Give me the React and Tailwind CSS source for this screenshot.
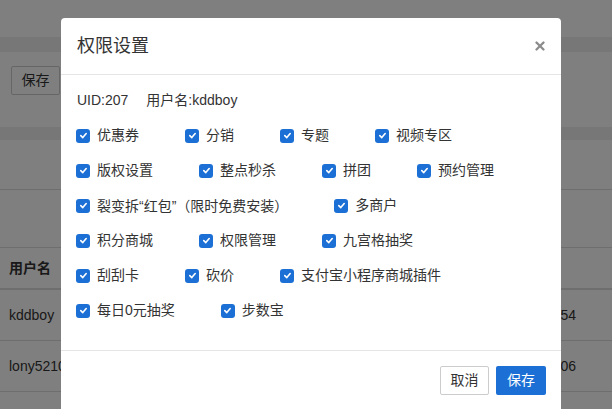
import { X } from 'lucide-react'

const ROWS = [
  ['优惠券', '分销', '专题', '视频专区'],
  ['版权设置', '整点秒杀', '拼团', '预约管理'],
  ['裂变拆“红包”（限时免费安装）', '多商户'],
  ['积分商城', '权限管理', '九宫格抽奖'],
  ['刮刮卡', '砍价', '支付宝小程序商城插件'],
  ['每日0元抽奖', '步数宝'],
]

const TABLE = [
  { name: 'kddboy', end: '54' },
  { name: 'lony5210', end: '06' },
  { name: '00510', end: '10' },
]

const CJK = { fontFamily: '"Noto Sans CJK SC", sans-serif', textSpacingTrim: 'space-all' }

// full-width brackets get a fixed 1em box, otherwise chrome trims them narrow
function Text({ value }) {
  const parts = value.split(/([（）])/)
  return parts.map((p, i) => {
    if (p === '（')
      return <span key={i} className="inline-block w-[14px] text-right" style={CJK}>（</span>
    if (p === '）')
      return <span key={i} className="inline-block w-[14px] text-left" style={CJK}>）</span>
    return <span key={i}>{p}</span>
  })
}

function Check({ label }) {
  return (
    <label className="flex items-center mr-[46px] shrink-0">
      <span className="w-[14px] h-[14px] rounded-[3px] bg-[#1b6fd5] flex items-center justify-center">
        <svg width="9" height="9" viewBox="0 0 10 10">
          <path d="M2 5.2 L4.2 7.3 L8 2.8" fill="none" stroke="#fff" strokeWidth="1.8" strokeLinecap="round" strokeLinejoin="round" />
        </svg>
      </span>
      <span className="ml-[7px] whitespace-nowrap">
        <Text value={label} />
      </span>
    </label>
  )
}

export default function App() {
  return (
    <div
      className="relative w-[612px] h-[409px] overflow-hidden bg-white text-[14px] text-[#333]"
      style={{ fontFamily: '"Liberation Sans", "Noto Sans CJK SC", sans-serif' }}
    >
      {/* page behind the dialog */}
      <div className="h-[37px]" />
      <div className="h-[15px] bg-[#eeeeee]" />
      <div className="h-[75px] px-[11px] pt-[14px]">
        <button className="w-[49px] h-[29px] border border-[#cccccc] rounded-[2px] bg-white">保存</button>
      </div>
      <div className="h-[13px] bg-[#eeeeee]" />
      <div className="h-[50px] border-b border-[#dddddd]" />
      <div className="h-[58px] border-b border-[#dddddd]" />
      <div className="h-[42px] border-b-2 border-[#dddddd] flex items-center justify-between px-[9px] font-bold">
        <span>用户名</span>
      </div>
      {TABLE.map((r) => (
        <div key={r.name} className="h-[51px] border-b border-[#dddddd] flex items-center justify-between pl-[9px] pr-[36px]">
          <span>{r.name}</span>
          <span>{r.end}</span>
        </div>
      ))}

      {/* overlay + dialog */}
      <div className="absolute inset-0 bg-black/50">
        <div className="ml-[61px] mt-[18px] w-[500px] bg-white rounded-t-[4px]">
          <div className="h-[57px] border-b border-[#e5e5e5] flex items-center justify-between pl-[16px] pr-[14px]">
            <span className="text-[18px] text-[#333]">权限设置</span>
            <X size={14} strokeWidth={4} className="text-[#8c8c8c]" />
          </div>
          <div className="px-[15px] pt-[15px] pb-[22px] border-b border-[#e5e5e5]">
            <div className="h-[20px] flex items-center pl-[1px]">
              <span>UID:207</span>
              <span className="ml-[18px]">用户名:kddboy</span>
            </div>
            <div className="mt-[8px]">
              {ROWS.map((row, i) => (
                <div key={i} className="h-[35px] flex items-center">
                  {row.map((l) => (
                    <Check key={l} label={l} />
                  ))}
                </div>
              ))}
            </div>
          </div>
          <div className="pt-[15px] pr-[15px] pb-[16px] flex justify-end gap-[7px]">
            <button className="w-[49px] h-[29px] border border-[#cccccc] rounded-[2px] bg-white text-[#333]">取消</button>
            <button className="w-[50px] h-[29px] rounded-[2px] bg-[#1b6fd5] text-white">保存</button>
          </div>
        </div>
      </div>
    </div>
  )
}
